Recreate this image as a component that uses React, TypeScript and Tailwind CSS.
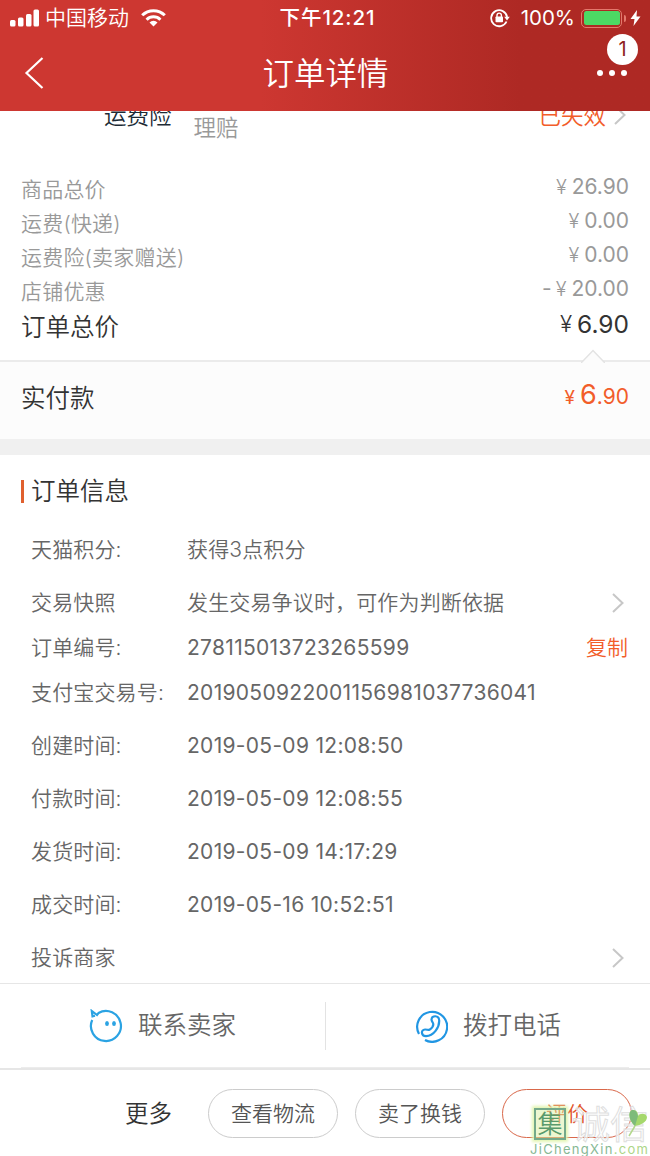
import type { ReactNode } from 'react'
import clsx from 'clsx'

const fees = [
  { label: '商品总价', value: '26.90' },
  { label: '运费(快递)', value: '0.00' },
  { label: '运费险(卖家赠送)', value: '0.00' },
  { label: '店铺优惠', value: '20.00', minus: true },
]

const times = [
  { label: '创建时间:', value: '2019-05-09 12:08:50' },
  { label: '付款时间:', value: '2019-05-09 12:08:55' },
  { label: '发货时间:', value: '2019-05-09 14:17:29' },
  { label: '成交时间:', value: '2019-05-16 10:52:51' },
]

const Chevron = ({ className }: { className?: string }) => (
  <svg
    className={clsx('h-[20px] w-[12px] shrink-0', className)}
    viewBox="0 0 12 20"
    fill="none"
    stroke="#c7c7c7"
    strokeWidth="2"
  >
    <path d="M1 1l9.5 9L1 19" />
  </svg>
)

const StatusBar = () => (
  <div className="flex h-[36px] items-center justify-between pr-[9px] pl-[10px] text-[21px]">
    <div className="flex w-[240px] items-center">
      <svg className="h-[18px] w-[29px]" viewBox="0 0 29 18" fill="#fff">
        <rect x="0" y="11" width="5.5" height="6.5" rx="1.5" />
        <rect x="8" y="8.5" width="5.5" height="9" rx="1.5" />
        <rect x="16" y="5" width="5.5" height="12.5" rx="1.5" />
        <rect x="23.5" y="0.5" width="5.5" height="17" rx="1.5" />
      </svg>
      <span className="ml-[6px]">中国移动</span>
      <svg
        className="ml-[12px] h-[18px] w-[25px]"
        viewBox="0 0 25 18"
        fill="none"
        stroke="#fff"
        strokeWidth="3"
      >
        <path d="M1.2 6.3a16 16 0 0 1 22.6 0" />
        <path d="M5.6 10.7a9.8 9.8 0 0 1 13.8 0" />
        <path d="M12.5 17.5l-4-4a5.6 5.6 0 0 1 8 0z" fill="#fff" stroke="none" />
      </svg>
    </div>
    <span className="ml-[4px] text-[20.5px] font-medium tracking-[0.9px]">下午12:21</span>
    <div className="flex w-[240px] items-center justify-end">
      <svg className="h-[20px] w-[20px]" viewBox="0 0 20 20" fill="none" stroke="#fff" strokeWidth="1.8">
        <path d="M16.5 13.5a8 8 0 1 1 .6-4.5" />
        <path d="M14.2 8.8h5.6l-2.8 3.6z" fill="#fff" stroke="none" />
        <rect x="5.5" y="8.5" width="7.5" height="5.7" rx="0.8" fill="#fff" stroke="none" />
        <path d="M7 9V7.3a2.2 2.2 0 0 1 4.4 0V9" strokeWidth="1.4" />
      </svg>
      <span className="ml-[11px] text-[20.5px] font-normal">100%</span>
      <div className="ml-[6px] h-[19px] w-[41px] rounded-[5px] border-[1.5px] border-[#e4796d] p-[1.5px]">
        <div className="h-full rounded-[2.5px] bg-[#4cd964]" />
      </div>
      <div className="ml-[2px] h-[7px] w-[2px] rounded-r-full bg-[#e4796d]" />
      <svg className="ml-[4px] h-[16px] w-[11px]" viewBox="0 0 11 16" fill="#fff">
        <path d="M7 0L0.5 9h4L3.5 16 10.5 6.5h-4z" />
      </svg>
    </div>
  </div>
)

const Header = () => (
  <header className="h-[111px] bg-linear-to-r from-[#cd3731] from-40% to-[#ae2924] to-80% text-white">
    <StatusBar />
    <div className="flex h-[75px] items-center justify-between pr-[23px] pb-[2px] pl-[24px]">
      <svg className="h-[32px] w-[42px]" viewBox="0 0 42 32" fill="none" stroke="#fff" strokeWidth="2.2">
        <path d="M18.5 1L2.5 16l16 15" />
      </svg>
      <h1 className="pt-[3px] text-[31.5px]">订单详情</h1>
      <div className="relative flex w-[42px] justify-end gap-[6px]">
        <i className="size-[6px] rounded-full bg-white" />
        <i className="size-[6px] rounded-full bg-white" />
        <i className="size-[6px] rounded-full bg-white" />
        <span className="absolute -top-[36px] -right-[11px] flex size-[31px] items-center justify-center rounded-full bg-white text-[20px] font-normal text-[#8f2320]">
          1
        </span>
      </div>
    </div>
  </header>
)

type InfoRowProps = {
  label: string
  value?: string
  numeric?: boolean
  className?: string
  children?: ReactNode
}

const InfoRow = ({ label, value, numeric, className, children }: InfoRowProps) => (
  <div className={clsx('flex items-center', className)}>
    <span className="w-[156px] shrink-0 tracking-[0.15px]">{label}</span>
    <span
      className={clsx(
        'flex-1 whitespace-nowrap',
        numeric ? 'font-normal tracking-[0.3px]' : 'tracking-[0.15px]',
      )}
    >
      {value}
    </span>
    {children}
  </div>
)

const Insurance = () => (
  <div className="flex h-[61px] items-start overflow-hidden pr-[24px] pl-[104px]">
    <span className="-mt-[12px] text-[22.5px] leading-[34px] text-[#1c2b36]">运费险</span>
    <span className="mt-px ml-[22px] text-[22.5px] leading-[32px] text-[#999]">理赔</span>
    <span className="-mt-[12px] ml-auto text-[22.5px] leading-[34px] text-[#f25d2a]">已失效</span>
    <Chevron className="-mt-[6px] ml-[8px]" />
  </div>
)

const Fees = () => (
  <section className="h-[188px] px-[21px] text-[21px] text-[#999]">
    {fees.map((fee) => (
      <div key={fee.label} className="flex h-[34px] items-center justify-between">
        <span className="pt-px tracking-[0.2px]">{fee.label}</span>
        <span className="-mt-[4px] flex items-center font-normal">
          {fee.minus && <span className="mr-[4px]">-</span>}
          <span className="mr-[5px] text-[20px] font-light">¥</span>
          {fee.value}
        </span>
      </div>
    ))}
    <div className="flex h-[38px] items-center justify-between text-[24.5px] text-[#333]">
      <span>订单总价</span>
      <span className="-mt-[6px] flex items-center font-normal">
        <span className="mr-[5px] text-[22.5px] font-light">¥</span>6.90
      </span>
    </div>
  </section>
)

const Paid = () => (
  <section className="relative flex h-[79px] items-center justify-between border-t-2 border-[#ebebeb] bg-[#fcfcfc] px-[21px] pb-[5px]">
    <svg className="absolute -top-[13px] right-[45px] h-[14px] w-[24px]" viewBox="0 0 24 14">
      <path d="M0 14L12 1.5 24 14" fill="#fcfcfc" stroke="#e3e3e3" strokeWidth="1.5" />
    </svg>
    <span className="text-[24.5px] text-[#333]">实付款</span>
    <span className="-mt-[6px] flex items-baseline text-[21px] font-normal text-[#f25d2a]">
      <span className="mr-[5px] text-[19px]">¥</span>
      <span className="text-[27px]">6</span>.90
    </span>
  </section>
)

const OrderInfo = () => (
  <section className="h-[528px] pr-[22px] pl-[31px] text-[21px] text-[#666]">
    <div className="-ml-[10px] flex h-[68px] items-center pt-[4px]">
      <i className="mr-[7px] h-[23px] w-[3px] bg-[#e0602f]" />
      <h2 className="text-[24.5px] text-[#333]">订单信息</h2>
    </div>
    <InfoRow className="h-[53px]" label="天猫积分:" value="获得3点积分" />
    <InfoRow className="h-[53px]" label="交易快照" value="发生交易争议时，可作为判断依据">
      <Chevron className="mr-[4px]" />
    </InfoRow>
    <InfoRow className="h-[37px]" label="订单编号:" value="278115013723265599" numeric>
      <span className="text-[#f25d2a]">复制</span>
    </InfoRow>
    <InfoRow className="h-[53px]" label="支付宝交易号:" value="2019050922001156981037736041" numeric />
    {times.map((time) => (
      <InfoRow key={time.label} className="h-[53px]" label={time.label} value={time.value} numeric />
    ))}
    <InfoRow className="h-[53px]" label="投诉商家">
      <Chevron className="mr-[4px]" />
    </InfoRow>
  </section>
)

const Contact = () => (
  <section className="border-t border-[#e6e6e6] text-[24.5px] text-[#666]">
    <div className="mx-[21px] flex h-[84px] items-center border-b border-[#ececec]">
      <div className="flex w-[304px] items-center pl-[68px]">
        <svg className="h-[34px] w-[34px]" viewBox="0 0 34 34" fill="none" stroke="#2ba3e3" strokeWidth="2.2">
          <path d="M3.2 11A15 15 0 1 0 9.5 4L8 6 2.800 2l.7 5.400 2.500-.7" />
          <ellipse cx="18" cy="14.5" rx="1.9" ry="2.6" fill="#2ba3e3" stroke="none" />
          <ellipse cx="25" cy="14.5" rx="1.9" ry="2.6" fill="#2ba3e3" stroke="none" />
        </svg>
        <span className="ml-[15px]">联系卖家</span>
      </div>
      <div className="h-[48px] w-px bg-[#e3e3e3]" />
      <div className="flex flex-1 items-center pl-[88px]">
        <svg className="h-[34px] w-[34px]" viewBox="0 0 34 34" fill="none" stroke="#2196e3" strokeWidth="2.2">
          <path d="M5 25A15 15 0 1 1 11 31" />
          <path d="M17.5 10.5c.3-4.500 7.500-4.500 7.700 1 .2 7-5.500 15.500-13.200 15.700-5 0-5.500-6.500-1-6.700 2.500-.1 3 1 4.800 0 2-1.300 3.500-3.300 3.500-5.300 0-1.800-1.900-2.500-1.800-4.700z" />
        </svg>
        <span className="ml-[15px]">拨打电话</span>
      </div>
    </div>
  </section>
)

const Watermark = () => (
  <div className="pointer-events-none absolute right-0 bottom-0 h-[50px] w-[120px]">
    <div className="flex items-start pt-[2px] pl-[4px]">
      <span className="flex size-[32px] items-center justify-center border-2 border-[#74a98a] bg-[#d9f0a3]/50 text-[25px] leading-none text-[#5a9a6c] shadow-[0_0_3px_2px_#e2f5b0]">
        集
      </span>
      <span className="ml-[6px] text-[38px] leading-[32px] whitespace-nowrap text-white/70 [-webkit-text-stroke:1px_#dedede]">
        诚信
      </span>
    </div>
    <svg className="absolute top-[2px] right-[2px] h-[30px] w-[20px]" viewBox="0 0 20 30">
      <path d="M7 18C0 12 0 2 5 2c4 0 5 3 5 6 2-3 8-3 9 1 0 5-6 8-12 9z" fill="#a5d86c" />
      <path d="M7 18C0 12 0 2 5 2c3 0 4 3 5 6z" fill="#7dbb7a" />
      <path d="M7 18l-6 10" stroke="#b3d88c" strokeWidth="1.5" />
    </svg>
    <div className="absolute bottom-0 left-0 text-[13px] leading-[14px] font-normal tracking-[1.3px] whitespace-nowrap text-[#86b894]">
      JiChengXin<span className="text-[#add687]">.com</span>
    </div>
  </div>
)

const pill = 'flex h-[49px] w-[130px] items-center justify-center rounded-full border'

const Actions = () => (
  <footer className="relative flex h-[88px] items-center justify-end gap-[17px] border-t-2 border-[#e6e6e6] pr-[18px] text-[21px] text-[#555]">
    <span className="mr-[19px] pt-px text-[23.5px] text-[#333]">更多</span>
    <button className={clsx(pill, 'border-[#ccc] pt-[2px]')}>查看物流</button>
    <button className={clsx(pill, 'border-[#ccc] pt-[2px]')}>卖了换钱</button>
    <button className={clsx(pill, 'border-[#d9684a] pt-[2px] text-[#e2552b]')}>评价</button>
    <Watermark />
  </footer>
)

export default function App() {
  return (
    <div className="h-[1156px] w-[650px] overflow-hidden bg-white font-['Inter','Noto_Sans_CJK_SC',sans-serif] font-[350]">
      <Header />
      <Insurance />
      <Fees />
      <Paid />
      <div className="h-[16px] bg-[#f0f0f0]" />
      <OrderInfo />
      <Contact />
      <Actions />
    </div>
  )
}
